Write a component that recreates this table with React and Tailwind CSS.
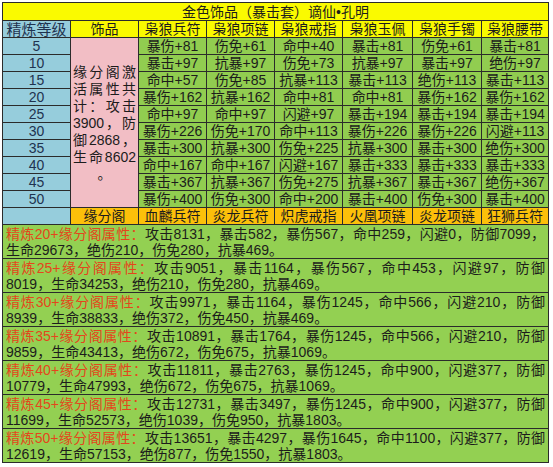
import { Fragment } from 'react'

const levels = [5, 10, 15, 20, 25, 30, 35, 40, 45, 50]

const pieces = ['枭狼兵符', '枭狼项链', '枭狼戒指', '枭狼玉佩', '枭狼手镯', '枭狼腰带']

const rows = [
  ['暴伤+81', '伤免+61', '命中+40', '暴击+81', '伤免+61', '暴击+81'],
  ['暴击+97', '抗暴+97', '伤免+73', '抗暴+97', '暴击+97', '绝伤+97'],
  ['命中+57', '伤免+85', '抗暴+113', '暴击+113', '绝伤+113', '暴击+113'],
  ['暴伤+162', '抗暴+162', '命中+81', '命中+81', '暴伤+162', '暴伤+162'],
  ['命中+97', '命中+97', '闪避+97', '暴击+194', '暴击+194', '暴击+194'],
  ['暴伤+226', '伤免+170', '命中+113', '暴伤+226', '暴伤+226', '闪避+113'],
  ['暴击+300', '抗暴+300', '伤免+225', '抗暴+300', '暴击+300', '绝伤+300'],
  ['命中+167', '命中+167', '闪避+167', '暴击+333', '暴击+333', '暴击+333'],
  ['暴击+367', '抗暴+367', '伤免+275', '抗暴+367', '暴击+367', '绝伤+367'],
  ['暴伤+400', '伤免+300', '命中+200', '暴击+400', '伤免+300', '暴击+400'],
]

const sets = ['血麟兵符', '炎龙兵符', '炽虎戒指', '火凰项链', '炎龙项链', '狂狮兵符']

const totals = [
  ['20', '攻击8131，暴击582，暴伤567，命中259，闪避0，防御7099，', '生命29673，绝伤210，伤免280，抗暴469。'],
  ['25', '攻击9051，暴击1164，暴伤567，命中453，闪避97，防御', '8019，生命34253，绝伤210，伤免280，抗暴469。'],
  ['30', '攻击9971，暴击1164，暴伤1245，命中566，闪避210，防御', '8939，生命38833，绝伤372，伤免450，抗暴469。'],
  ['35', '攻击10891，暴击1764，暴伤1245，命中566，闪避210，防御', '9859，生命43413，绝伤672，伤免675，抗暴1069。'],
  ['40', '攻击11811，暴击2763，暴伤1245，命中900，闪避377，防御', '10779，生命47993，绝伤672，伤免675，抗暴1069。'],
  ['45', '攻击12731，暴击3497，暴伤1245，命中900，闪避377，防御', '11699，生命52573，绝伤1039，伤免950，抗暴1803。'],
  ['50', '攻击13651，暴击4297，暴伤1645，命中1100，闪避377，防御', '12619，生命57153，绝伤877，伤免1550，抗暴1803。'],
]

const pinkLines = ['缘分阁激', '活属性共', '计：攻击', '3900，防', '御2868，', '生命8602']

function Cell({ className = '', children }) {
  return (
    <div className={'flex items-center justify-center whitespace-nowrap leading-none ' + className}>
      {children}
    </div>
  )
}

export default function App() {
  return (
    <div className="w-[553px] h-[467px] bg-white overflow-hidden pt-[2px] pl-[2px] font-['Liberation_Sans','Noto_Sans_CJK_SC',sans-serif] text-[14px] text-[#1c1c1c]">
      <div className="grid w-[547px] gap-px bg-[#2b2b2b] p-px grid-cols-[67px_67px_67px_67px_67px_69px_68px_66px] grid-rows-[17px_16px_repeat(11,16px)_repeat(7,33px)]">
        <Cell className="col-span-8 bg-[#fafa00]">金色饰品（暴击套）谪仙•孔明</Cell>

        <Cell className="bg-[#96cddc] text-[15px] text-[#1f3350]">精炼等级</Cell>
        <Cell className="bg-[#fafa00]">饰品</Cell>
        {pieces.map(p => (
          <Cell key={p} className="bg-[#fafa00]">{p}</Cell>
        ))}

        {levels.map((lv, i) => (
          <Fragment key={lv}>
            <Cell className="bg-[#96cddc] text-[#1f3350]">{lv}</Cell>
            {i === 0 && (
              <div className="row-span-10 bg-[#f2bec5] flex flex-col justify-center px-[2px] pt-[2px] text-[14px] leading-[17px]">
                {pinkLines.map(t => (
                  <div key={t} className="text-justify [text-align-last:justify]">{t}</div>
                ))}
                <div className="text-center">。</div>
              </div>
            )}
            {rows[i].map((v, j) => (
              <Cell key={j} className="bg-[#91cd50]">{v}</Cell>
            ))}
          </Fragment>
        ))}

        <div className="bg-[#96cddc]" />
        <Cell className="bg-[#fcc00a]">缘分阁</Cell>
        {sets.map(s => (
          <Cell key={s} className="bg-[#fcc00a]">{s}</Cell>
        ))}

        {totals.map(([lv, a, b]) => (
          <div key={lv} className="col-span-8 bg-[#93d052] px-[3px] pt-px leading-[16px]">
            <div className="text-justify [text-align-last:justify]">
              <span className="text-[#e4461c]">精炼{lv}+缘分阁属性：</span>
              {a}
            </div>
            <div>{b}</div>
          </div>
        ))}
      </div>
    </div>
  )
}
